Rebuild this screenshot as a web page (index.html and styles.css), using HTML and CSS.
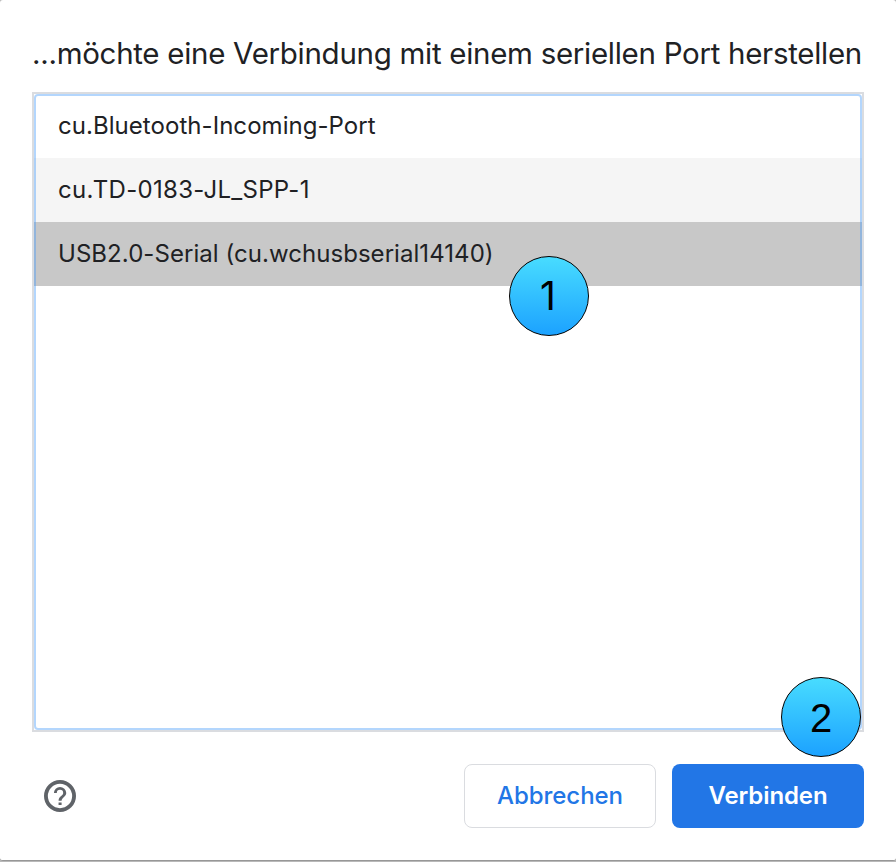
FILE: index.html
```html
<!DOCTYPE html>
<html lang="de">
<head>
<meta charset="utf-8">
<title>Serieller Port</title>
<link rel="stylesheet" href="styles.css">
</head>
<body>
<main class="dialog">
  <h1 class="title">...möchte eine Verbindung mit einem seriellen Port herstellen</h1>
  <div class="list">
    <div class="row">cu.Bluetooth-Incoming-Port</div>
    <div class="row striped">cu.TD-0183-JL_SPP-1</div>
    <div class="row selected">USB2.0-Serial (cu.wchusbserial14140)</div>
    <span class="marker first">1</span>
    <span class="marker second">2</span>
  </div>
  <footer class="actions">
    <svg class="help" viewBox="2 2 20 20" fill="#5f6368"><path d="M12 2a10 10 0 1 0 0 20 10 10 0 0 0 0-20zm0 17.600a7.600 7.600 0 1 1 0-15.200 7.600 7.600 0 0 1 0 15.200zM11.100 16h1.900v1.700h-1.900zM12 6.300a3.800 3.800 0 0 0-3.800 3.800H10a2 2 0 1 1 4 0c0 1.900-2.900 1.800-2.900 4.900H13c0-2.100 2.900-2.500 2.900-4.900A3.900 3.900 0 0 0 12 6.300z"/></svg>
    <button class="btn cancel">Abbrechen</button>
    <button class="btn connect">Verbinden</button>
  </footer>
</main>
</body>
</html>
```
FILE: styles.css
```css
* { box-sizing: border-box; }
body {
  margin: 0;
  background: #b9b9b9;
  font-family: Inter, "Liberation Sans", sans-serif;
  color: #202124;
}
.dialog {
  display: flex;
  flex-direction: column;
  width: 896px;
  height: 861px;
  padding: 31px 32px 0;
  background: #fff;
  border-bottom: 1px solid #979797;
  border-radius: 3px;
}
.title {
  margin: 0 0 17px;
  height: 44px;
  font-size: 29.500px;
  font-weight: 400;
  line-height: 44px;
  letter-spacing: -0.290px;
  white-space: nowrap;
}
.list {
  position: relative;
  width: 832px;
  height: 640px;
  border: 2px solid #dadce0;
}
.list::after {
  content: "";
  position: absolute;
  inset: 0;
  border: 2px solid rgba(66, 153, 250, 0.4);
  border-radius: 4px;
}
.row {
  height: 64px;
  padding-left: 24px;
  font-size: 24px;
  line-height: 64px;
  letter-spacing: 0.050px;
  white-space: nowrap;
}
.striped {
  background: #f5f5f5;
  letter-spacing: 0.280px;
}
.selected { background: #c8c8c8; }
.marker {
  position: absolute;
  z-index: 1;
  width: 80px;
  height: 80px;
  border: 1.300px solid #000;
  border-radius: 50%;
  background: linear-gradient(#48dcff, #1ca2ff);
  color: #000;
  font: 40px/80px "Liberation Sans", sans-serif;
  text-align: center;
}
.first {
  left: 475px;
  top: 162px;
  padding-right: 2px;
  font: 39px/78px Inter, "Liberation Sans", sans-serif;
}
.second { left: 747px; top: 583px; }
.actions {
  display: flex;
  align-items: center;
  margin-top: 32px;
  height: 64px;
}
.help {
  width: 32px;
  height: 32px;
  margin: 0 auto 0 12px;
}
.btn {
  width: 192px;
  height: 64px;
  padding: 0;
  border: 0;
  border-radius: 8px;
  font: 500 24px/62px Inter, "Liberation Sans", sans-serif;
  letter-spacing: -0.050px;
}
.cancel {
  border: 1px solid #dadce0;
  background: #fff;
  color: #2276e6;
}
.connect {
  margin-left: 16px;
  background: #2276e6;
  color: #fff;
  font-weight: 600;
  letter-spacing: -0.100px;
}
```
